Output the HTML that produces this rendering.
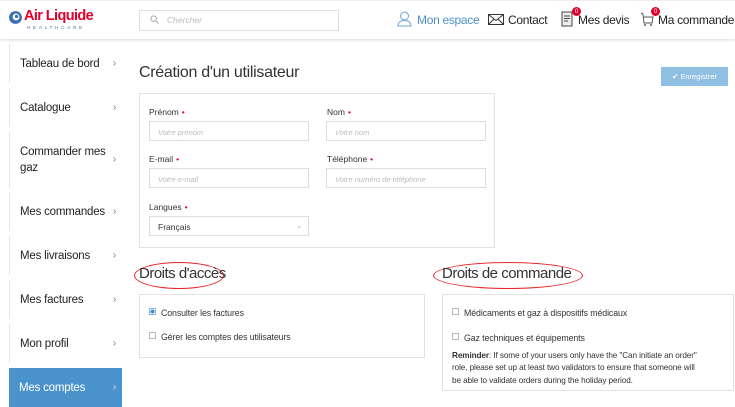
<!DOCTYPE html>
<html><head><meta charset="utf-8"><style>
*{box-sizing:border-box;margin:0;padding:0}
body{width:735px;height:407px;overflow:hidden;background:#fff;font-family:"Liberation Sans",sans-serif;color:#222;position:relative}
.abs{position:absolute;white-space:nowrap}
.hdr{left:0;top:0;width:735px;height:39px;background:#fff;box-shadow:0 1px 3px rgba(0,0,0,.15);border-top:1px solid #eee}
.nav{left:9px;width:113px;border-left:1px solid #e6e6e6;font-size:11.5px;letter-spacing:-0.2px;color:#222;padding-left:10px;display:flex;align-items:center}
.nav .ch{position:absolute;right:6px;font-size:10px;color:#777}
.lab{font-size:8.5px;color:#333}
.lab b{color:#e2002a;font-weight:normal;margin-left:3px}
.inp{border:1px solid #ddd;height:20px;font-size:7.5px;color:#bbb;font-style:italic;padding:6px 8px;width:160px}
.box{border:1px solid #e2e2e2;background:#fff}
.cb{width:7px;height:7px;border:1px solid #bbb;display:inline-block}
.t{font-size:8.8px;color:#333;letter-spacing:-0.1px}
.ell{border:1.5px solid #e8262c;border-radius:50%}
.h{font-size:12px;letter-spacing:-0.3px}
</style></head><body>
<div class="abs hdr"></div>
<svg class="abs" style="left:8px;top:10px" width="15" height="15" viewBox="0 0 14 14"><circle cx="7" cy="7" r="6" fill="#3a6fb0"/><circle cx="7.5" cy="6.5" r="3.2" fill="#fff"/><circle cx="8" cy="6" r="1.6" fill="#3a6fb0"/></svg>
<div class="abs" style="left:24px;top:8px;font-size:14.5px;font-weight:bold;color:#e2002a;letter-spacing:-0.6px">Air Liquide</div>
<div class="abs" style="left:27px;top:25px;font-size:4.5px;color:#3a6fb0;letter-spacing:2.8px">HEALTHCARE</div>
<div class="abs" style="left:139px;top:10px;width:200px;height:21px;border:1px solid #ddd"></div>
<svg class="abs" style="left:150px;top:15px" width="9" height="9" viewBox="0 0 9 9"><circle cx="3.7" cy="3.7" r="2.8" fill="none" stroke="#aaa" stroke-width="1"/><path d="M6 6l2.5 2.5" stroke="#aaa"/></svg>
<div class="abs" style="left:167px;top:15px;font-size:8.5px;color:#bbb;font-style:italic">Chercher</div>
<svg class="abs" style="left:397px;top:11px" width="15" height="16" viewBox="0 0 15 16"><circle cx="7.5" cy="5" r="4" fill="none" stroke="#6aa3d6"/><path d="M1 15c0-4 3-5.5 6.5-5.5S14 11 14 15z" fill="none" stroke="#6aa3d6"/></svg>
<div class="abs h" style="left:417px;top:13px;color:#4d8fcc">Mon espace</div>
<svg class="abs" style="left:488px;top:14px" width="16" height="11" viewBox="0 0 16 11"><rect x="0.5" y="0.5" width="15" height="10" fill="none" stroke="#333"/><path d="M.5 .5L8 6.5 15.5.5M.5 10.5L6 5M15.5 10.5L10 5" fill="none" stroke="#333"/></svg>
<div class="abs h" style="left:508px;top:13px">Contact</div>
<svg class="abs" style="left:560px;top:11px" width="13" height="16" viewBox="0 0 13 16"><rect x="2" y="1" width="10" height="14" fill="#eee" stroke="#444"/><path d="M4 5h6M4 7.5h6M4 10h4" stroke="#444"/></svg>
<div class="abs" style="left:572px;top:7px;width:9px;height:9px;border-radius:50%;background:#e2002a;color:#fff;font-size:6.5px;text-align:center;line-height:9px">0</div>
<div class="abs h" style="left:578px;top:13px">Mes devis</div>
<svg class="abs" style="left:640px;top:12px" width="14" height="15" viewBox="0 0 14 15"><path d="M1 1l2 1 1 9h8l1-6H4" fill="none" stroke="#555"/><circle cx="5" cy="13" r="1" fill="#555"/><circle cx="11" cy="13" r="1" fill="#555"/></svg>
<div class="abs" style="left:651px;top:7px;width:9px;height:9px;border-radius:50%;background:#e2002a;color:#fff;font-size:6.5px;text-align:center;line-height:9px">0</div>
<div class="abs h" style="left:658px;top:13px">Ma commande</div>

<div class="abs nav" style="top:44px;height:39px">Tableau de bord<span class="ch">›</span></div>
<div class="abs nav" style="top:88px;height:39px">Catalogue<span class="ch">›</span></div>
<div class="abs nav" style="top:132px;height:56px;line-height:16px">Commander mes<br>gaz<span class="ch">›</span></div>
<div class="abs nav" style="top:192px;height:39px">Mes commandes<span class="ch">›</span></div>
<div class="abs nav" style="top:236px;height:39px">Mes livraisons<span class="ch">›</span></div>
<div class="abs nav" style="top:280px;height:39px">Mes factures<span class="ch">›</span></div>
<div class="abs nav" style="top:324px;height:39px">Mon profil<span class="ch">›</span></div>
<div class="abs nav" style="top:368px;height:39px;background:#4a93cc;color:#fff;border-left:none">Mes comptes<span class="ch" style="color:#cfe3f3">›</span></div>

<div class="abs" style="left:139px;top:64px;font-size:16px;color:#333;letter-spacing:-0.3px">Création d'un utilisateur</div>
<div class="abs" style="left:661px;top:67px;width:67px;height:19px;background:#8fbfe2;color:#fff;font-size:7.5px;line-height:19px;text-align:center">✔ Enregistrer</div>

<div class="abs box" style="left:139px;top:93px;width:356px;height:155px"></div>
<div class="abs lab" style="left:149px;top:107px">Prénom<b>•</b></div>
<div class="abs lab" style="left:327px;top:107px">Nom<b>•</b></div>
<div class="abs inp" style="left:149px;top:121px">Votre prénom</div>
<div class="abs inp" style="left:326px;top:121px">Votre nom</div>
<div class="abs lab" style="left:149px;top:154px">E-mail<b>•</b></div>
<div class="abs lab" style="left:327px;top:154px">Téléphone<b>•</b></div>
<div class="abs inp" style="left:149px;top:168px">Votre e-mail</div>
<div class="abs inp" style="left:326px;top:168px">Votre numéro de téléphone</div>
<div class="abs lab" style="left:149px;top:202px">Langues<b>•</b></div>
<div class="abs inp" style="left:149px;top:216px;color:#333;font-style:normal;font-size:8.5px;padding-top:5px">Français<span style="position:absolute;right:6px;color:#aaa;font-size:7px">⌄</span></div>

<div class="abs ell" style="left:134px;top:262px;width:90px;height:27px"></div>
<div class="abs" style="left:139px;top:265px;font-size:15px;color:#333;letter-spacing:-0.5px">Droits d'accès</div>
<div class="abs ell" style="left:433px;top:262px;width:150px;height:27px"></div>
<div class="abs" style="left:442px;top:265px;font-size:15px;color:#333;letter-spacing:-0.5px">Droits de commande</div>

<div class="abs box" style="left:139px;top:294px;width:286px;height:64px"></div>
<div class="abs cb" style="left:149px;top:308px;border-color:#8ab8e0;background:radial-gradient(#3d8ad0 55%,#fff 56%)"></div>
<div class="abs t" style="left:161px;top:308px">Consulter les factures</div>
<div class="abs cb" style="left:149px;top:332px"></div>
<div class="abs t" style="left:161px;top:332px">Gérer les comptes des utilisateurs</div>

<div class="abs box" style="left:442px;top:294px;width:292px;height:97px"></div>
<div class="abs cb" style="left:452px;top:308px"></div>
<div class="abs t" style="left:464px;top:308px">Médicaments et gaz à dispositifs médicaux</div>
<div class="abs cb" style="left:452px;top:333px"></div>
<div class="abs t" style="left:464px;top:333px">Gaz techniques et équipements</div>
<div class="abs t" style="left:452px;top:350px;font-size:8.2px;line-height:12.3px"><b>Reminder</b>: If some of your users only have the "Can initiate an order"<br>role, please set up at least two validators to ensure that someone will<br>be able to validate orders during the holiday period.</div>
</body></html>
